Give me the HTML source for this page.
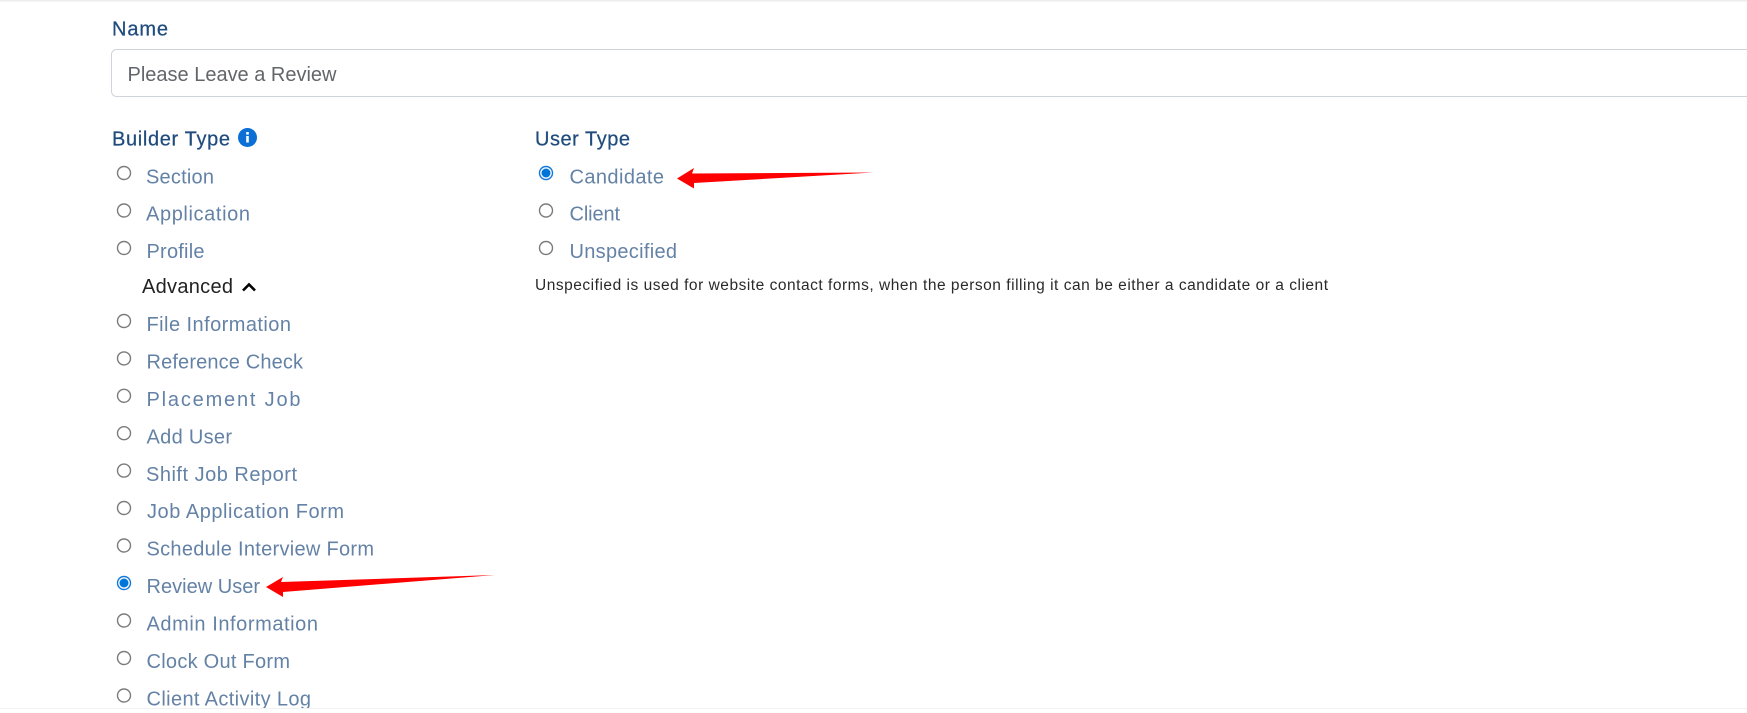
<!DOCTYPE html>
<html>
<head>
<meta charset="utf-8">
<title>Form Builder</title>
<style>
html,body{margin:0;padding:0;background:#fff;width:1747px;height:713px;overflow:hidden}
svg{display:block}
text{font-family:"Liberation Sans",sans-serif;font-size:20px}
.h{fill:#1f4c7c;font-size:20px;stroke:#1f4c7c;stroke-width:.25}
.l{fill:#6482a6}
.r{fill:#fff;stroke:#7b7b7b;stroke-width:1.4}
.c{fill:#fff;stroke:#1279dc;stroke-width:1.4}
.d{fill:#0075d9}
</style>
</head>
<body>
<svg width="1747" height="713" viewBox="0 0 1747 713" xmlns="http://www.w3.org/2000/svg">
<rect x="0" y="0" width="1747" height="1.5" fill="#eeeeee"/>

<text class="h" x="112" y="35.500" textLength="56" lengthAdjust="spacing">Name</text>
<rect x="111.500" y="49.500" width="1700" height="47" rx="5" fill="#fff" stroke="#cfd4dc" stroke-width="1"/>
<text x="127.500" y="81" fill="#62656a" textLength="209" lengthAdjust="spacing">Please Leave a Review</text>

<text class="h" x="112" y="145.500" textLength="118" lengthAdjust="spacing">Builder Type</text>
<circle cx="247.500" cy="137.500" r="9.500" fill="#0b6fd6"/>
<rect x="246.200" y="136" width="2.600" height="6.500" fill="#fff"/>
<rect x="246.200" y="132" width="2.600" height="2.600" fill="#fff"/>

<circle class="r" cx="124" cy="173" r="6.500"/>
<text class="l" x="146" y="183.500" textLength="68" lengthAdjust="spacing">Section</text>
<circle class="r" cx="124" cy="210.500" r="6.500"/>
<text class="l" x="146" y="220.500" textLength="104" lengthAdjust="spacing">Application</text>
<circle class="r" cx="124" cy="248" r="6.500"/>
<text class="l" x="146.500" y="258" textLength="58" lengthAdjust="spacing">Profile</text>

<text x="142" y="293" fill="#222" textLength="91" lengthAdjust="spacing">Advanced</text>
<path d="M243 290.500L249 284.500L255 290.500" fill="none" stroke="#000" stroke-width="2.600"/>

<circle class="r" cx="124" cy="321" r="6.500"/>
<text class="l" x="146.500" y="331" textLength="144.500" lengthAdjust="spacing">File Information</text>
<circle class="r" cx="124" cy="358.400" r="6.500"/>
<text class="l" x="146.500" y="368.500" textLength="156.500" lengthAdjust="spacing">Reference Check</text>
<circle class="r" cx="124" cy="395.800" r="6.500"/>
<text class="l" x="146.500" y="406" textLength="154" lengthAdjust="spacing">Placement Job</text>
<circle class="r" cx="124" cy="433.200" r="6.500"/>
<text class="l" x="146.500" y="443.500" textLength="85.500" lengthAdjust="spacing">Add User</text>
<circle class="r" cx="124" cy="470.600" r="6.500"/>
<text class="l" x="146" y="481" textLength="151" lengthAdjust="spacing">Shift Job Report</text>
<circle class="r" cx="124" cy="508" r="6.500"/>
<text class="l" x="147" y="518" textLength="197" lengthAdjust="spacing">Job Application Form</text>
<circle class="r" cx="124" cy="545.500" r="6.500"/>
<text class="l" x="146.500" y="555.500" textLength="227.500" lengthAdjust="spacing">Schedule Interview Form</text>
<circle class="c" cx="124" cy="583" r="6.500"/>
<circle class="d" cx="124" cy="583" r="4.500"/>
<text class="l" x="146.500" y="593" textLength="113.500" lengthAdjust="spacing">Review User</text>
<circle class="r" cx="124" cy="620.500" r="6.500"/>
<text class="l" x="146.500" y="630.500" textLength="171.500" lengthAdjust="spacing">Admin Information</text>
<circle class="r" cx="124" cy="658" r="6.500"/>
<text class="l" x="146.500" y="668" textLength="143.500" lengthAdjust="spacing">Clock Out Form</text>
<circle class="r" cx="124" cy="695.500" r="6.500"/>
<text class="l" x="146.500" y="705.500" textLength="164.500" lengthAdjust="spacing">Client Activity Log</text>
<rect x="0" y="708" width="1747" height="5" fill="#fff"/>
<rect x="0" y="708" width="1747" height="1" fill="#f2f2f2"/>

<text class="h" x="535" y="145.500" textLength="95" lengthAdjust="spacing">User Type</text>
<circle class="c" cx="546" cy="173" r="6.500"/>
<circle class="d" cx="546" cy="173" r="4.500"/>
<text class="l" x="569.500" y="183.500" textLength="94.500" lengthAdjust="spacing">Candidate</text>
<circle class="r" cx="546" cy="210.500" r="6.500"/>
<text class="l" x="569.500" y="220.500" textLength="50.500" lengthAdjust="spacing">Client</text>
<circle class="r" cx="546" cy="248" r="6.500"/>
<text class="l" x="569.500" y="258" textLength="107.500" lengthAdjust="spacing">Unspecified</text>
<text x="535" y="290" fill="#2a2a2a" style="font-size:15.500px" textLength="793" lengthAdjust="spacing">Unspecified is used for website contact forms, when the person filling it can be either a candidate or a client</text>

<path d="M677 178.500L694 168L692 173.500L873 172.500L694 183L694 188.500Z" fill="#ff0000"/>
<path d="M266 587L283 577L281 582L495 575L283 592L283 597Z" fill="#ff0000"/>
</svg>
</body>
</html>
